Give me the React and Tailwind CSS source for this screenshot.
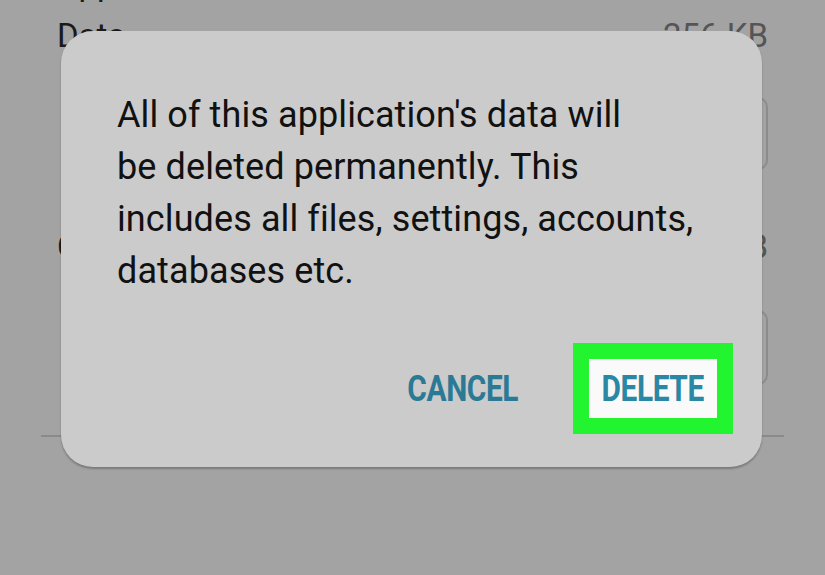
export default function App() {
  return (
    <div
      className="relative w-[825px] h-[575px] overflow-hidden bg-[#a3a3a3]"
      style={{ fontFamily: "Roboto, 'Noto Sans', sans-serif" }}
    >
      {/* page behind the dialog (dimmed) */}
      <div className="flex flex-col pl-[57px] pr-[57px]">
        <div className="mt-[-36px] h-[40px] text-[33px] leading-[40px] text-[#1a1a1a]">Application</div>
        <div className="mt-[12px] h-[40px] flex justify-between text-[33px] leading-[40px]">
          <span className="text-[#1a1a1a]">Data</span>
          <span className="text-[#555]">256 KB</span>
        </div>
        <div className="mt-[41px] flex justify-end">
          <div className="w-[220px] h-[73px] rounded-[10px] border-2 border-[#8c8c8c]" />
        </div>
        <div className="mt-[57px] h-[40px] flex justify-between text-[33px] leading-[40px]">
          <span className="text-[#1a1a1a]">Cache</span>
          <span className="text-[#555]">0 B</span>
        </div>
        <div className="mt-[43px] flex justify-end">
          <div className="w-[220px] h-[75px] rounded-[10px] border-2 border-[#8c8c8c]" />
        </div>
      </div>
      <div className="mt-[50px] mx-[41px] h-[2px] bg-[#8a8a8a]" />

      {/* dialog */}
      <div className="absolute left-[61px] top-[31px] w-[701px] h-[436px] rounded-[32px] bg-[#cbcbcb] shadow-[0_2px_2px_rgba(0,0,0,0.25)] flex flex-col">
        <p className="pt-[58px] pl-[56px] text-[36px] leading-[52px] tracking-[0.1px] text-[#111]">
          All of this application's data will
          <br />
          be deleted permanently. This
          <br />
          includes all files, settings, accounts,
          <br />
          databases etc.
        </p>
        <div className="mt-[46px] mr-[29px] flex items-center justify-end">
          <span className="inline-block mr-[44px] text-[36px] font-bold tracking-[-0.5px] text-[#2b7a95] scale-x-[0.83]">
            CANCEL
          </span>
          <div className="border-[16px] border-[#22f530]">
            <div className="w-[128px] h-[59px] bg-[#fafafa] flex items-center justify-center">
              <span className="inline-block text-[36px] font-bold tracking-[-0.5px] text-[#2b88a4] scale-x-[0.83]">
                DELETE
              </span>
            </div>
          </div>
        </div>
      </div>
    </div>
  );
}
